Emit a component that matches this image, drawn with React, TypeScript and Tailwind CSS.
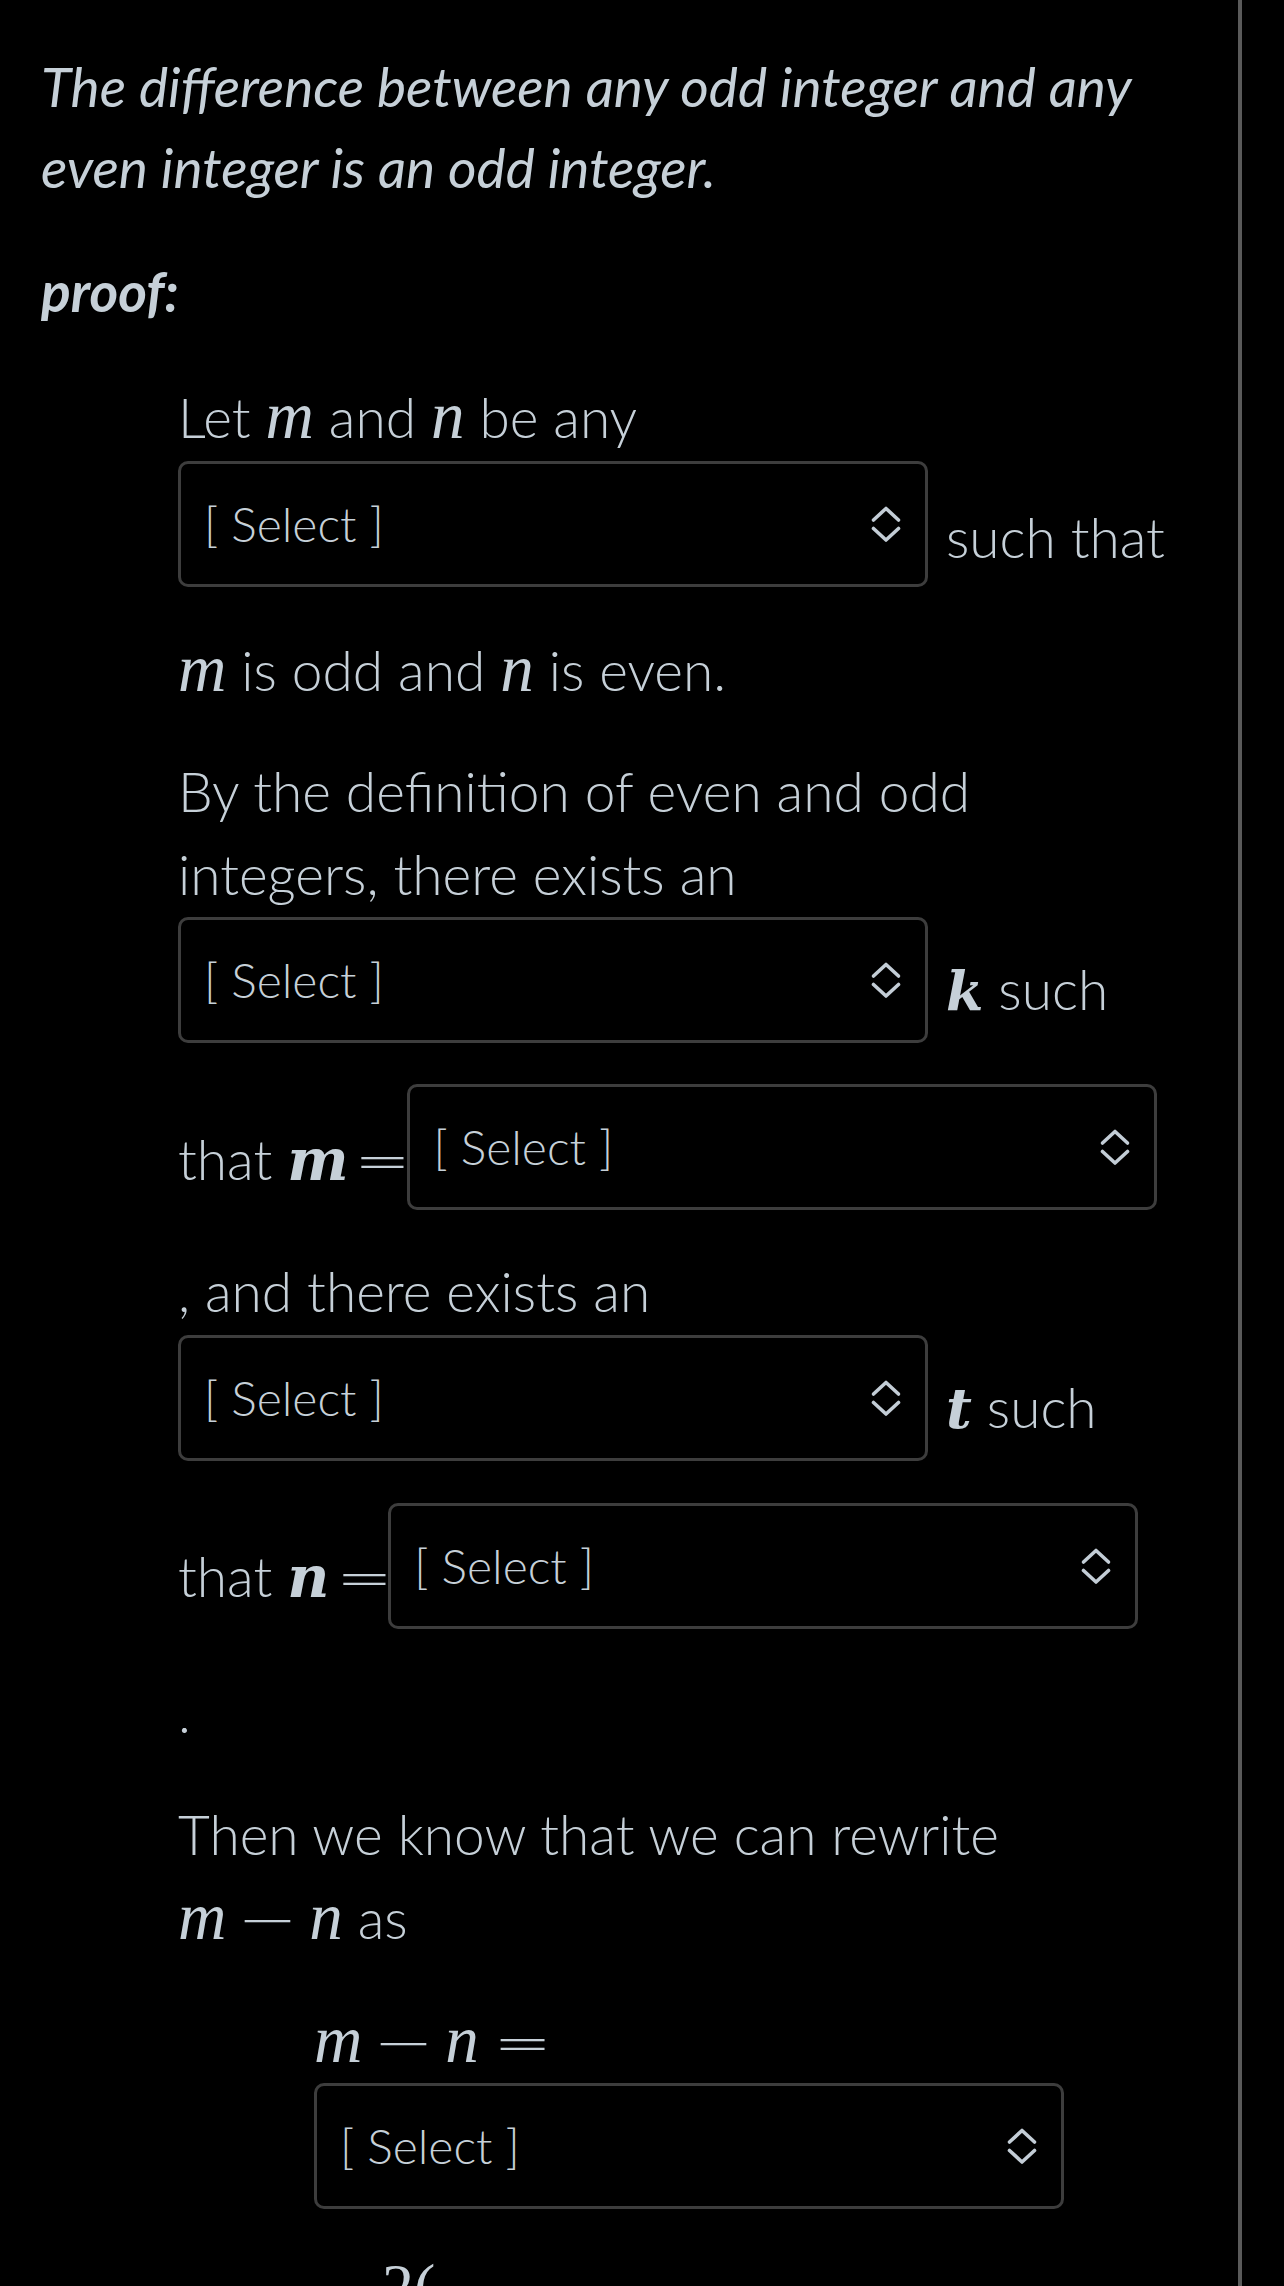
import React from "react";

const M = ({ children }: { children: React.ReactNode }) => (
  <span className="font-['Liberation_Serif',serif] italic text-[67px] font-normal">{children}</span>
);

const MB = ({ children, cls }: { children: React.ReactNode; cls?: string }) => (
  <span className={"font-['DejaVu_Serif',serif] italic font-bold " + (cls || "text-[58px]")}>{children}</span>
);

const Op = ({ children, cls }: { children: React.ReactNode; cls?: string }) => (
  <span className={"inline-block font-['DejaVu_Sans',sans-serif] not-italic text-[56px] font-extralight " + (cls || "")}>
    {children}
  </span>
);

const Arrows = () => (
  <svg width="32" height="36" viewBox="0 0 32 36" fill="none" className="shrink-0">
    <path d="M3.5 14 L16 2.5 L28.5 14" stroke="#c3cdd6" strokeWidth="3.6" strokeLinecap="round" strokeLinejoin="round" />
    <path d="M3.5 22.5 L16 34 L28.5 22.5" stroke="#c3cdd6" strokeWidth="3.6" strokeLinecap="round" strokeLinejoin="round" />
  </svg>
);

const Select = () => (
  <div className="w-[750px] h-[126px] shrink-0 rounded-[10px] border-[3px] border-[#3d3d3d] bg-black flex items-center justify-between pl-[23px] pr-[23px]">
    <span className="text-[48px] font-light leading-none">[ Select ]</span>
    <Arrows />
  </div>
);

export default function App() {
  return (
    <div className="w-[1284px] h-[2286px] overflow-hidden bg-black flex font-['Lato',sans-serif] text-[#c6d0d8]">
      <div className="w-[1238px] shrink-0 pl-[41px] pt-[46px]">
        <div className="italic text-[55px] leading-[81px]">
          <div>The difference between any odd integer and any</div>
          <div>even integer is an odd integer.</div>
        </div>
        <div className="italic font-bold text-[55px] leading-[81px] mt-[43px]">proof:</div>

        <div className="pl-[137px] text-[55px] font-light leading-[62px]">
          {/* Row A */}
          <div className="h-[129px] pt-[52px] flex items-baseline whitespace-pre">
            <span>Let </span>
            <M>m</M>
            <span> and </span>
            <M>n</M>
            <span> be any</span>
          </div>
          {/* Row B */}
          <div className="h-[126px] flex items-start">
            <Select />
            <span className="mt-[45px] ml-[18px] whitespace-pre">such that</span>
          </div>
          {/* Row C */}
          <div className="h-[113px] pt-[50px] flex items-baseline whitespace-pre">
            <M>m</M>
            <span> is odd and </span>
            <M>n</M>
            <span> is even.</span>
          </div>
          {/* Row D */}
          <div className="h-[123px] pt-[60px] whitespace-pre">By the definition of even and odd</div>
          {/* Row E */}
          <div className="h-[83px] pt-[20px] whitespace-pre">integers, there exists an</div>
          {/* Row F */}
          <div className="h-[137px] pt-[11px] flex items-start">
            <Select />
            <span className="mt-[41px] ml-[18px] flex items-baseline whitespace-pre">
              <MB cls="text-[54px]">k</MB>
              <span> such</span>
            </span>
          </div>
          {/* Row G */}
          <div className="h-[167px] pt-[41px] flex items-start">
            <span className="mt-[44px] flex items-baseline whitespace-pre">
              <span>that </span>
              <MB>m</MB>
              <Op cls="ml-[10px] mr-[2px] scale-x-[1.2]">=</Op>
            </span>
            <Select />
          </div>
          {/* Row H */}
          <div className="h-[113px] pt-[50px] whitespace-pre">, and there exists an</div>
          {/* Row I */}
          <div className="h-[138px] pt-[12px] flex items-start">
            <Select />
            <span className="mt-[41px] ml-[18px] flex items-baseline whitespace-pre">
              <MB cls="text-[56px]">t</MB>
              <span> such</span>
            </span>
          </div>
          {/* Row J */}
          <div className="h-[168px] pt-[42px] flex items-start">
            <span className="mt-[42px] flex items-baseline whitespace-pre">
              <span>that </span>
              <MB>n</MB>
              <Op cls="ml-[12px] scale-x-[1.2]">=</Op>
            </span>
            <Select />
          </div>
          {/* Row K */}
          <div className="h-[115px] pt-[52px]">.</div>
          {/* Row L */}
          <div className="h-[122px] pt-[59px] whitespace-pre">Then we know that we can rewrite</div>
          {/* Row M */}
          <div className="h-[82px] pt-[19px] flex items-baseline whitespace-pre">
            <M>m</M>
            <Op cls="mx-[18px] scale-x-[1.3]">−</Op>
            <M>n</M>
            <span> as</span>
          </div>

          <div className="pl-[136px]">
            {/* Row N */}
            <div className="h-[123px] pt-[60px] flex items-baseline whitespace-pre">
              <M>m</M>
              <Op cls="mx-[18px] scale-x-[1.3]">−</Op>
              <M>n</M>
              <Op cls="ml-[20px] scale-x-[1.25]">=</Op>
            </div>
            {/* Row O */}
            <div className="pt-[12px]">
              <Select />
            </div>
            {/* Row P */}
            <div className="pt-[47px] pl-[68px] flex items-baseline whitespace-pre">
              <span className="font-['Liberation_Serif',serif] text-[64px]">2(</span>
            </div>
          </div>
        </div>
      </div>
      <div className="w-[4px] shrink-0 h-full bg-[#5a5a5a]" />
      <div className="flex-1" />
    </div>
  );
}
